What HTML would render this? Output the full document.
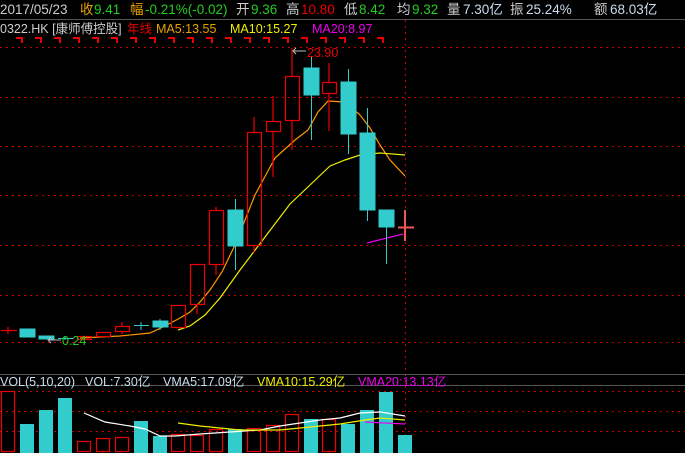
<!DOCTYPE html><html><head><meta charset="utf-8"><style>
body{margin:0;background:#000;width:685px;height:453px;overflow:hidden}
svg{display:block}
text{font-family:"Liberation Sans","Noto Sans CJK SC",sans-serif;font-size:12.5px}
.h text{font-size:13.5px}
</style></head><body>
<svg width="685" height="453" xmlns="http://www.w3.org/2000/svg">
<line x1="0" y1="19.5" x2="685" y2="19.5" stroke="#555"/>
<g class="h">
<text x="0" y="14" fill="#ccc">2017/05/23</text>
<text x="80" y="14" fill="#e8a000">收</text><text x="94" y="14" fill="#2c2">9.41</text>
<text x="130" y="14" fill="#e8a000">幅</text><text x="145" y="14" fill="#2c2">-0.21%(-0.02)</text>
<text x="236" y="14" fill="#ccc">开</text><text x="251" y="14" fill="#2c2">9.36</text>
<text x="286" y="14" fill="#ccc">高</text><text x="301" y="14" fill="#e00">10.80</text>
<text x="344" y="14" fill="#ccc">低</text><text x="359" y="14" fill="#2c2">8.42</text>
<text x="397" y="14" fill="#ccc">均</text><text x="412" y="14" fill="#2c2">9.32</text>
<text x="447" y="14" fill="#ccc">量</text><text x="463" y="14" fill="#cde">7.30亿</text>
<text x="510" y="14" fill="#ccc">振</text><text x="526" y="14" fill="#cde">25.24%</text>
<text x="594" y="14" fill="#ccc">额</text><text x="610" y="14" fill="#cde">68.03亿</text>
</g>
<g>
<text x="0" y="33" fill="#ccc">0322.HK [康师傅控股]</text>
<text x="127" y="33" fill="#e00">年线</text>
<text x="156" y="33" fill="#e8a000">MA5:13.55</text>
<text x="230" y="33" fill="#ee0">MA10:15.27</text>
<text x="312" y="33" fill="#e0e">MA20:8.97</text>
</g>
<g stroke="#c00" stroke-dasharray="2,4" stroke-width="1">
<line x1="0" y1="47.5" x2="685" y2="47.5"/><line x1="0" y1="97.5" x2="685" y2="97.5"/>
<line x1="0" y1="146.5" x2="685" y2="146.5"/><line x1="0" y1="195.5" x2="685" y2="195.5"/>
<line x1="0" y1="245.5" x2="685" y2="245.5"/><line x1="0" y1="295.5" x2="685" y2="295.5"/>
<line x1="0" y1="342.5" x2="685" y2="342.5"/>
<line x1="0" y1="391.5" x2="685" y2="391.5"/><line x1="0" y1="411.5" x2="685" y2="411.5"/><line x1="0" y1="431.5" x2="685" y2="431.5"/>
<line x1="405.5" y1="20" x2="405.5" y2="453"/>
</g>
<g stroke="#e00" stroke-width="2" fill="none">
<path d="M16 38h6v5M35 38h6v5M54 38h6v5M73 38h6v5M92 38h6v5M111 38h6v5M130 38h6v5M149 38h6v5M168 38h6v5M187 38h6v5M206 38h6v5M225 38h6v5M244 38h6v5M263 38h6v5M282 38h6v5M301 38h6v5M320 38h6v5M339 38h6v5M358 38h6v5M377 38h6v5"/>
</g>
<polyline fill="none" stroke="#f90" stroke-width="1.2" points="80,338 120,336 150,333 165,326 180,318 190,312 200,302 210,290 222,272 235,245 255,195 275,158 295,140 308,130 318,112 328,101 345,102 360,115 370,128 380,145 390,160 405,176"/>
<polyline fill="none" stroke="#ee0" stroke-width="1.2" points="178,330 190,326 205,315 220,298 240,270 265,237 290,204 310,185 330,166 345,160 360,155 380,153 405,155"/>
<polyline fill="none" stroke="#e0e" stroke-width="1.2" points="367,243 403,234"/>
<g stroke="#e00" fill="none" stroke-width="1.2">
<path d="M1 330.5h16M8 327v7"/>
<rect x="77.5" y="336.5" width="14" height="3"/>
<rect x="96.5" y="332.5" width="14" height="4"/>
<rect x="115.5" y="326.5" width="14" height="5"/><path d="M122 322v4M122 331v3"/>
<rect x="171.5" y="305.5" width="14" height="22"/>
<rect x="190.5" y="264.5" width="14" height="40"/><path d="M197 304v10"/>
<rect x="209.5" y="210.5" width="14" height="54"/><path d="M216 207v3M216 264v11"/>
<rect x="247.5" y="132.5" width="14" height="113"/><path d="M254 117v15M254 245v8"/>
<rect x="266.5" y="121.5" width="14" height="10"/><path d="M273 96v25M273 131v46"/>
<rect x="285.5" y="76.5" width="14" height="44"/><path d="M292 48v28M292 120v30"/>
<rect x="322.5" y="82.5" width="14" height="11"/><path d="M329 63v19M329 93v38"/>
</g>
<path d="M398 227.5h16M405 210v31" stroke="#e55" stroke-width="2" fill="none"/>
<g fill="#3cc" stroke="#3cc">
<rect x="20" y="329" width="15" height="8"/>
<rect x="39" y="336" width="15" height="3"/>
<path d="M58 338.5h15M65 336v4M134 325.5h15M141 322v8" fill="none"/>
<rect x="153" y="321" width="15" height="6"/><path d="M160 319v2M160 327v3" fill="none"/>
<rect x="228" y="210" width="15" height="36"/><path d="M235.5 199v11M235.5 246v24" fill="none"/>
<rect x="304" y="68" width="15" height="27"/><path d="M311.5 57v11M311.5 95v45" fill="none"/>
<rect x="341" y="82" width="15" height="52"/><path d="M348.5 69v13M348.5 134v20" fill="none"/>
<rect x="360" y="133" width="15" height="77"/><path d="M367.5 108v25M367.5 210v11" fill="none"/>
<rect x="379" y="210" width="15" height="17"/><path d="M386.5 227v37" fill="none"/>
</g>
<text x="307" y="57" fill="#e00" font-size="13">23.90</text>
<path d="M306 51h-13M296 48l-3 3 3 3" stroke="#bbb" fill="none"/>
<text x="62" y="345" fill="#2c2" font-size="13">0.24</text>
<path d="M61 340h-13M51 337l-3 3 3 3" stroke="#bbb" fill="none"/>
<line x1="0" y1="374.5" x2="685" y2="374.5" stroke="#555"/>
<line x1="0" y1="385.5" x2="685" y2="385.5" stroke="#555"/>
<text x="0" y="386" fill="#cde">VOL(5,10,20)</text>
<text x="85" y="386" fill="#cde">VOL:7.30亿</text>
<text x="163" y="386" fill="#cde">VMA5:17.09亿</text>
<text x="257" y="386" fill="#ee0">VMA10:15.29亿</text>
<text x="358" y="386" fill="#e0e">VMA20:13.13亿</text>
<g stroke="#e00" fill="none" stroke-width="1.2">
<rect x="1.5" y="391.5" width="13" height="60"/>
<rect x="77.5" y="441.5" width="13" height="10"/>
<rect x="96.5" y="438.5" width="13" height="13"/>
<rect x="115.5" y="437.5" width="13" height="14"/>
<rect x="171.5" y="434.5" width="13" height="17"/>
<rect x="190.5" y="435.5" width="13" height="16"/>
<rect x="209.5" y="429.5" width="13" height="22"/>
<rect x="247.5" y="428.5" width="13" height="23"/>
<rect x="266.5" y="425.5" width="13" height="26"/>
<rect x="285.5" y="414.5" width="13" height="37"/>
<rect x="322.5" y="419.5" width="13" height="32"/>
</g>
<g fill="#3cc">
<rect x="20" y="424" width="14" height="29"/>
<rect x="39" y="410" width="14" height="43"/>
<rect x="58" y="398" width="14" height="55"/>
<rect x="134" y="421" width="14" height="32"/>
<rect x="153" y="436" width="14" height="17"/>
<rect x="228" y="429" width="14" height="24"/>
<rect x="304" y="419" width="14" height="34"/>
<rect x="341" y="424" width="14" height="29"/>
<rect x="360" y="410" width="14" height="43"/>
<rect x="379" y="392" width="14" height="61"/>
<rect x="398" y="435" width="14" height="18"/>
</g>
<polyline fill="none" stroke="#fff" stroke-width="1.2" points="84,413 105,422 130,426 145,429 160,436 175,436 200,434 230,432 260,430 280,426 300,423 320,420 340,418 360,413 380,412 405,416"/>
<polyline fill="none" stroke="#ee0" stroke-width="1.2" points="178,423 200,426 240,430 280,430 300,428 340,424 365,420 380,418 405,420"/>
<polyline fill="none" stroke="#e0e" stroke-width="1.2" points="365,422 405,424"/>
</svg>
</body></html>
